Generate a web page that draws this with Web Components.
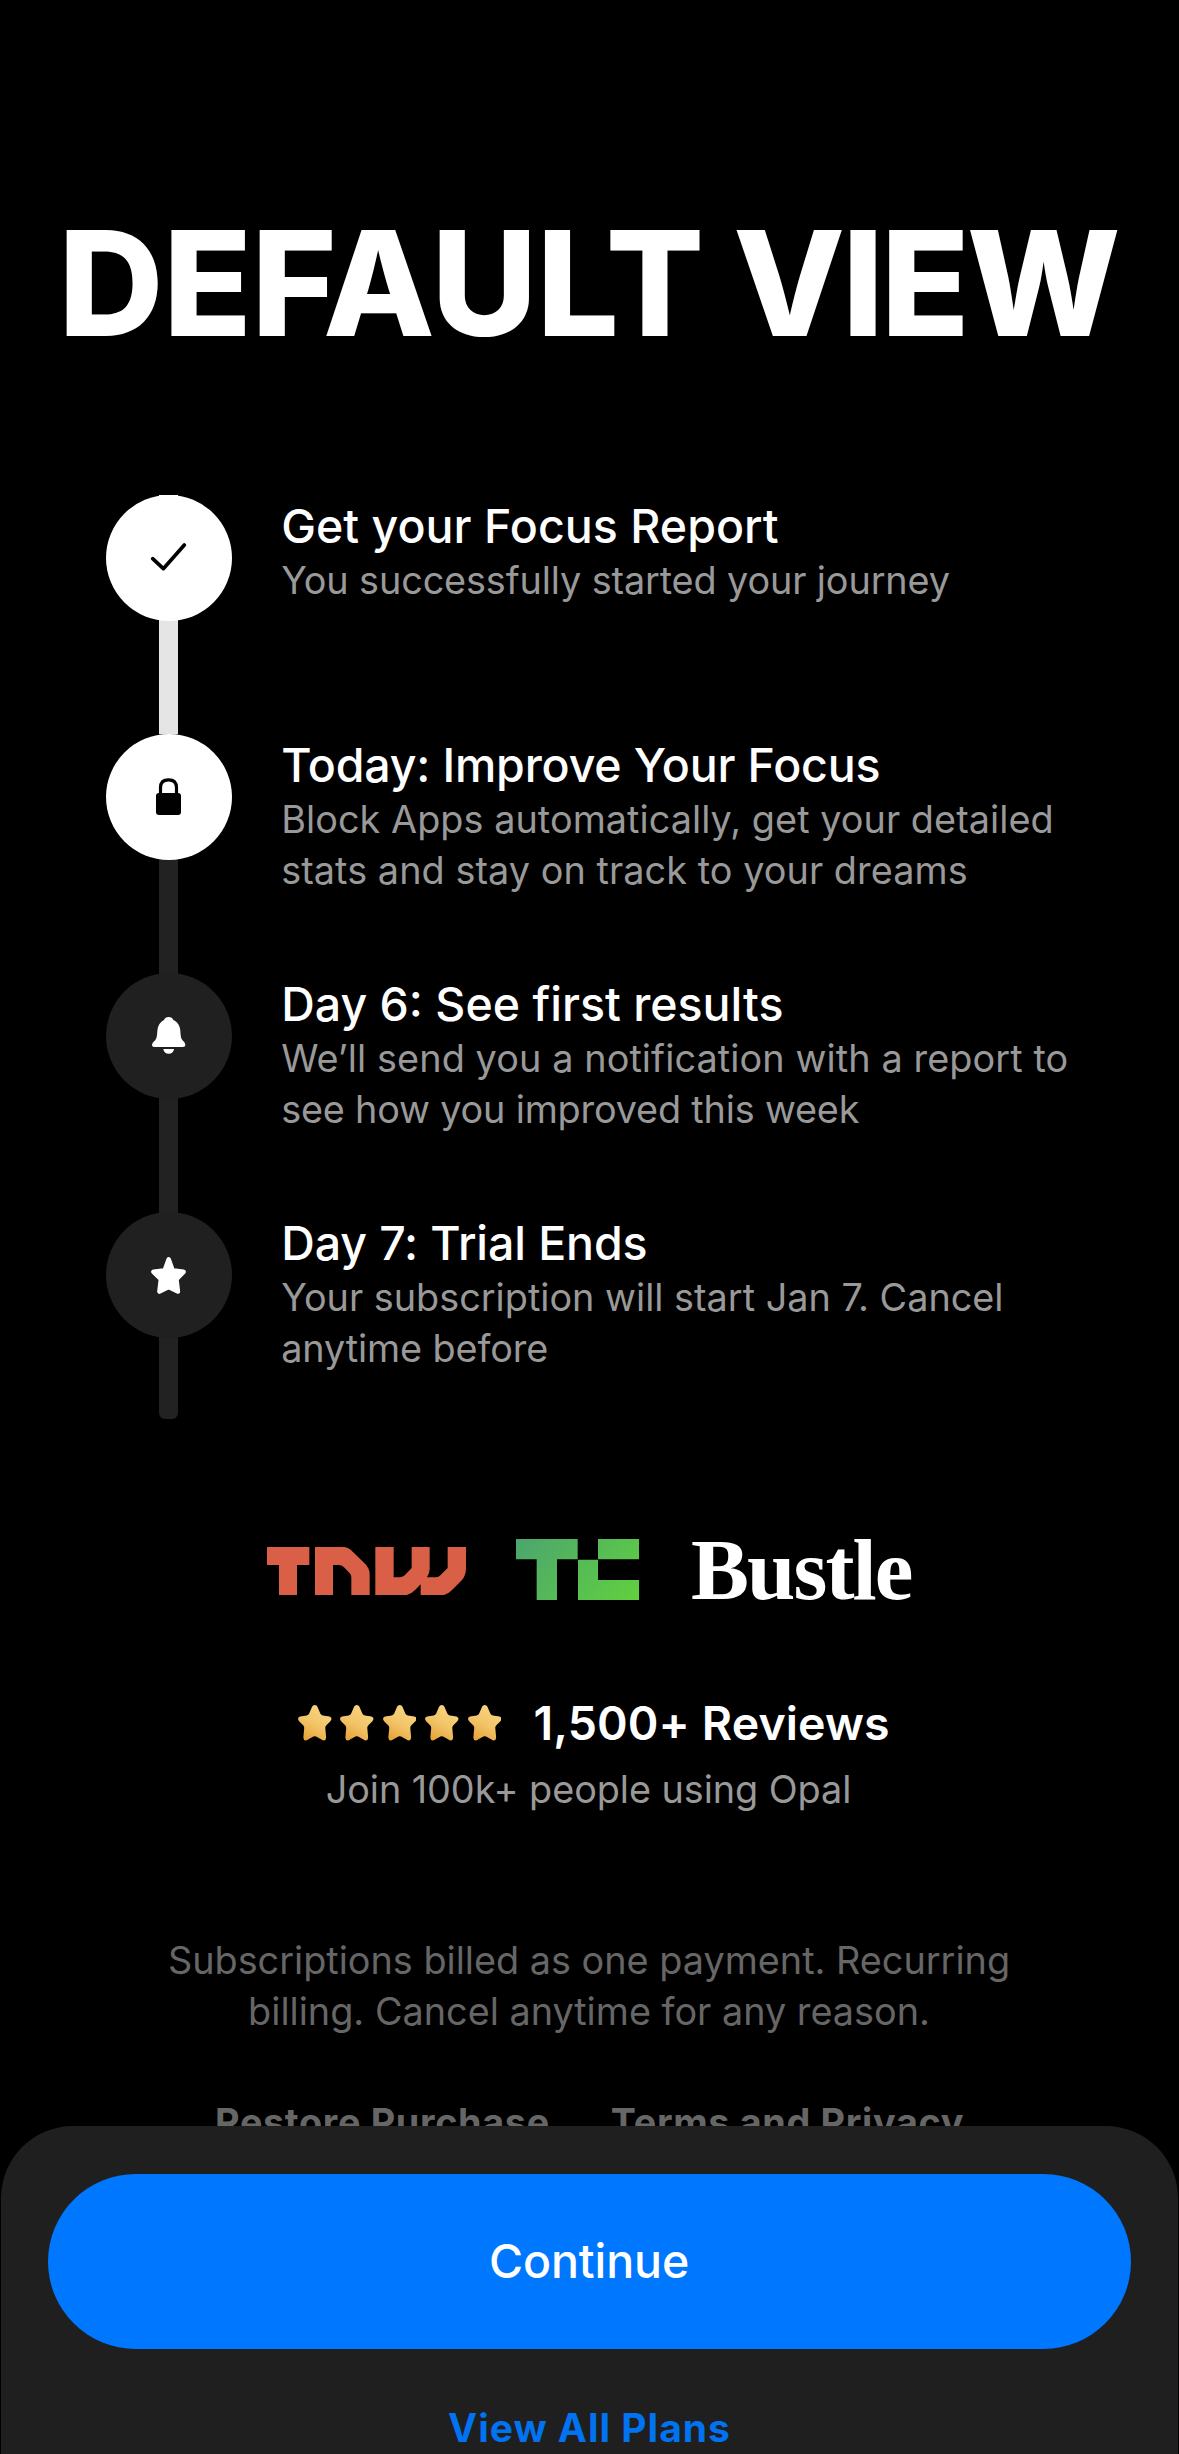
<!DOCTYPE html>
<html lang="en">
<head>
<meta charset="utf-8">
<title>Default View</title>
<style>
  html, body { margin: 0; background: #000; }
  body { width: 1179px; height: 2454px; overflow: hidden; font-family: Inter, "Liberation Sans", sans-serif; color: #fff; }
</style>
</head>
<body>
<paywall-screen></paywall-screen>

<template id="t-paywall-screen">
  <style>
    :host { display: block; position: relative; height: 2454px; overflow: hidden; background: #000; }
    h1 { margin: 0; padding: 203px 0 0 58.5px; font-size: 145.4px; line-height: 160px; font-weight: 760; letter-spacing: -.4px; white-space: nowrap; }
    h1 span { letter-spacing: -2.8px; margin-left: -2px; }
    .timeline { padding: 131.7px 0 0 106px; display: flex; flex-direction: column; }
    .press { display: flex; align-items: center; gap: 50px; padding: 120px 0 0 267px; }
    .press tnw-logo { padding-top: 3px; }
    .legal { margin-top: 119.6px; padding-right: 1px; font-size: 37.8px; line-height: 51px; color: #666; text-align: center; }
    .legal span { display: block; }
    .links { display: flex; justify-content: center; gap: 61px; margin-top: 60.7px; font-size: 37.8px; line-height: 51px; font-weight: 650; letter-spacing: .65px; color: #666; white-space: nowrap; }
    purchase-sheet { position: absolute; left: 1px; right: 1px; top: 2126px; bottom: 0; }
  </style>
  <h1>DEFAULT <span>VIEW</span></h1>
  <div class="timeline">
    <timeline-step icon="check" state="done">
      <span slot="title" style="letter-spacing:.03px">Get your Focus Report</span>
      <span slot="line" style="letter-spacing:-.12px">You successfully started your journey</span>
    </timeline-step>
    <timeline-step icon="lock" state="current">
      <span slot="title" style="letter-spacing:-.17px">Today: Improve Your Focus</span>
      <span slot="line" style="letter-spacing:.05px">Block Apps automatically, get your detailed</span>
      <span slot="line" style="letter-spacing:.06px">stats and stay on track to your dreams</span>
    </timeline-step>
    <timeline-step icon="bell">
      <span slot="title">Day 6: See first results</span>
      <span slot="line" style="letter-spacing:.1px">We’ll send you a notification with a report to</span>
      <span slot="line" style="letter-spacing:-.18px">see how you improved this week</span>
    </timeline-step>
    <timeline-step icon="star" last>
      <span slot="title" style="letter-spacing:-.11px">Day 7: Trial Ends</span>
      <span slot="line">Your subscription will start Jan 7. Cancel</span>
      <span slot="line" style="letter-spacing:-.1px">anytime before</span>
    </timeline-step>
  </div>
  <div class="press"><tnw-logo></tnw-logo><tc-logo></tc-logo><bustle-logo></bustle-logo></div>
  <review-summary>
    <span slot="count">1,500+ Reviews</span>
    <span slot="note">Join 100k+ people using Opal</span>
  </review-summary>
  <div class="legal">
    <span>Subscriptions billed as one payment. Recurring</span>
    <span>billing. Cancel anytime for any reason.</span>
  </div>
  <div class="links"><span>Restore Purchase</span><span>Terms and Privacy</span></div>
  <purchase-sheet>
    <span slot="primary">Continue</span>
    <span slot="secondary">View All Plans</span>
  </purchase-sheet>
</template>

<template id="t-timeline-step">
  <style>
    :host { display: flex; height: 238.6px; --disc: #202020; --bar: #222; --ink: #fff; }
    :host([state]) { height: 239.3px; --disc: #fff; --ink: #000; }
    :host([state="done"]) { --bar: linear-gradient(#fff 0 60px, #e5e5e5 60px); }
    :host([last]) { height: 207.1px; --end: 6px; }
    .rail { width: 126px; display: grid; justify-items: center; }
    .bar { grid-area: 1 / 1; width: 19px; height: 100%; margin-right: 1px; background: var(--bar); border-radius: 0 0 var(--end, 0) var(--end, 0); }
    .disc { grid-area: 1 / 1; width: 126px; height: 126px; border-radius: 50%; background: var(--disc); color: var(--ink); z-index: 1; }
    svg { display: block; width: 126px; height: 126px; }
    .text { padding: 2px 0 0 49.2px; white-space: nowrap; }
    .title { font-size: 46.5px; line-height: 58px; font-weight: 500; }
    .lines { font-size: 37.8px; line-height: 51px; color: #999; }
    ::slotted(span) { display: block; }
  </style>
  <div class="rail"><div class="bar"></div><div class="disc"></div></div>
  <div class="text">
    <div class="title"><slot name="title"></slot></div>
    <div class="lines"><slot name="line"></slot></div>
  </div>
</template>

<template id="t-tnw-logo">
  <style>:host { display: block; } svg { display: block; width: 199px; height: 48.7px; }</style>
  <svg viewBox="51 81 597 146" fill="#d96046" role="img" aria-label="TNW">
    <path d="M51 81H178V135H141V227H87V135H51Z"/>
    <path d="M195 81H279Q295 82 305 92L346 132Q359 146 359 163V227H304V172Q304 164 298 158L282 142Q276 135 266 135H249V227H195Z"/>
    <path d="M376 81H431V172H450Q459 171 465 165L485 144V81H539V146Q539 159 531 172H557Q566 172 572 165L593 144V81H648V146Q647 167 636 180L606 210Q591 227 565 227H512V193L496 209Q479 227 455 227H376Z"/>
  </svg>
</template>

<template id="t-tc-logo">
  <style>:host { display: block; } svg { display: block; width: 123px; height: 61px; }</style>
  <svg viewBox="798 57 369 183" role="img" aria-label="TC">
    <defs><linearGradient id="g" gradientUnits="userSpaceOnUse" x1="830" y1="20" x2="1120" y2="270"><stop offset="0" stop-color="#4ba56f"/><stop offset="1" stop-color="#60cf40"/></linearGradient></defs>
    <path fill="url(#g)" d="M798 57H983V118H921V240H860V118H798ZM1044 57H1167V118H1044ZM984 119H1044V180H1167V240H984Z"/>
  </svg>
</template>

<template id="t-bustle-logo">
  <style>:host { display: block; padding-left: 2px; font: 700 87px/61px "Liberation Serif", serif; letter-spacing: -1.94px; }</style>Bustle
</template>

<template id="t-review-summary">
  <style>
    :host { display: block; padding-top: 94px; }
    .row { display: flex; align-items: center; padding-left: 298px; height: 58px; }
    .stars { display: flex; gap: 8.9px; margin-right: 32.4px; }
    svg { display: block; width: 33.5px; height: 35.6px; }
    .count { font-size: 46.5px; line-height: 58px; font-weight: 600; letter-spacing: .1px; white-space: nowrap; }
    .note { margin-top: 12.1px; padding-right: 2px; font-size: 37.8px; line-height: 51px; color: #999; text-align: center; letter-spacing: -.06px; }
  </style>
  <div class="row"><div class="stars"></div><div class="count"><slot name="count"></slot></div></div>
  <div class="note"><slot name="note"></slot></div>
</template>

<template id="t-purchase-sheet">
  <style>
    :host { display: flex; flex-direction: column; background: #1f1f1f; border-radius: 72px 72px 0 0; padding: 48px 47px 0; box-sizing: border-box; text-align: center; }
    .primary { height: 175px; line-height: 175.6px; padding-right: 1px; border-radius: 88px; background: #0077ff; font-size: 46.5px; font-weight: 500; letter-spacing: -.09px; }
    .secondary { margin-top: 53.5px; font-size: 39px; line-height: 50px; font-weight: 650; letter-spacing: 1px; color: #0172f0; }
  </style>
  <div class="primary"><slot name="primary"></slot></div>
  <div class="secondary"><slot name="secondary"></slot></div>
</template>

<script>
  // Icons share the 126px disc; each is drawn on a 378-unit grid.
  const ICONS = {
    check: `<svg viewBox="48 45 378 378"><path d="M188 236L220 266L283 195" fill="none" stroke="currentColor" stroke-width="11" stroke-linecap="round" stroke-linejoin="round"/></svg>`,
    lock: `<svg viewBox="48 762 378 378"><rect x="198" y="939" width="75" height="66" rx="9" fill="currentColor"/><path d="M211.500 942V923Q211.500 899.500 235.500 899.500T259.500 923V942" fill="none" stroke="currentColor" stroke-width="9.500"/></svg>`,
    bell: `<svg viewBox="48 69 378 378" fill="currentColor"><path d="M236 201C243 201 248 205 250 210C263 216 270 227 271 243C272 260 273 266 279 272C283 276 286 280 286 285C286 289 283 291 279 291H193C189 291 186 289 186 285C186 280 190 276 194 272C200 266 201 260 202 243C203 227 210 216 222 210C224 205 229 201 236 201Z"/><path d="M220 297H252C251 306 245 311.500 236 311.500C227 311.500 221 306 220 297Z"/></svg>`,
    star: `<svg viewBox="48 783 378 378"><path d="M236 925.500L246.500 955Q248 958 251 958.500L280.500 962.500L261.500 982Q259 985 259.500 988L263.500 1021.500L239 1009Q236 1007.500 233 1009L208.500 1021.500L212.500 988Q213 985 210.500 982L190.500 962.500L221 958.500Q224 958 225.500 955Z" fill="currentColor" stroke="currentColor" stroke-width="14" stroke-linejoin="round"/></svg>`
  };

  const ratingStar = (i) => `<svg viewBox="24 45 100 106"><defs><linearGradient id="s${i}" gradientUnits="userSpaceOnUse" x1="96" y1="60" x2="50" y2="145"><stop offset="0" stop-color="#f6d27e"/><stop offset=".5" stop-color="#f2c468"/><stop offset="1" stop-color="#e8a53d"/></linearGradient></defs><path fill="url(#s${i})" d="M66 50Q68 45 74 45T82 50L91 71Q93 75 98 76L118 79Q124 81 124 86Q124 90 120 94L108 106Q105 109 105.500 114L108 142Q108 150 101 150.500Q98 150.500 94 148L78 139Q74 137 70 139L54 148Q50 150.500 47 150.500Q40 150 40 142L42.500 114Q43 109 40 106L28 94Q24 90 24 86Q24 81 30 79L50 76Q55 75 57 71Z"/></svg>`;

  const define = (name, setup) => customElements.define(name, class extends HTMLElement {
    connectedCallback() {
      if (this.shadowRoot) return;
      const root = this.attachShadow({ mode: "open" });
      root.append(document.getElementById("t-" + name).content.cloneNode(true));
      if (setup) setup(this, root);
    }
  });

  define("timeline-step", (host, root) => {
    root.querySelector(".disc").innerHTML = ICONS[host.getAttribute("icon")];
  });
  define("tnw-logo");
  define("tc-logo");
  define("bustle-logo");
  define("review-summary", (host, root) => {
    root.querySelector(".stars").innerHTML = [0, 1, 2, 3, 4].map(ratingStar).join("");
  });
  define("purchase-sheet");
  define("paywall-screen");
</script>
</body>
</html>
